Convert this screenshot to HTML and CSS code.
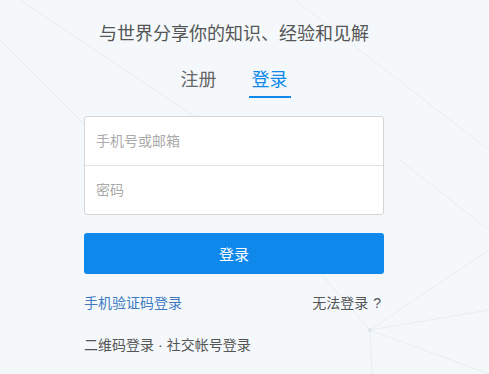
FILE: index.html
```html
<!DOCTYPE html>
<html lang="zh">
<head>
<meta charset="utf-8">
<link rel="stylesheet" href="styles.css">
</head>
<body>
<div class="page">
  <div class="panel">
    <h2 class="slogan">与世界分享你的知识、经验和见解</h2>
    <div class="tabs">
      <a class="tab">注册</a>
      <a class="tab active">登录</a>
    </div>
    <div class="fields">
      <div class="field"><span class="ph">手机号或邮箱</span></div>
      <div class="field"><span class="ph">密码</span></div>
    </div>
    <button class="submit">登录</button>
    <div class="links">
      <a class="sms">手机验证码登录</a>
      <a class="cant">无法登录<span class="q">?</span></a>
    </div>
    <div class="alt">二维码登录<span class="dot">·</span>社交帐号登录</div>
  </div>
</div>
</body>
</html>
```

FILE: styles.css
```css
html, body {
  margin: 0;
  padding: 0;
  height: 100%;
}
body {
  background-color: #f4f8fb;
  background-image: url("data:image/svg+xml;utf8,<svg xmlns='http://www.w3.org/2000/svg' width='489' height='374'><g stroke='%23e8edf1' stroke-width='1' fill='none'><line x1='0' y1='40' x2='170' y2='210'/><line x1='20' y1='0' x2='200' y2='120'/><line x1='295' y1='0' x2='489' y2='150'/><line x1='370' y1='330' x2='489' y2='250'/><line x1='370' y1='330' x2='489' y2='374'/><line x1='370' y1='330' x2='300' y2='250'/><line x1='370' y1='330' x2='372' y2='374'/><line x1='370' y1='330' x2='489' y2='310'/><line x1='400' y1='160' x2='489' y2='230'/></g><circle cx='370' cy='330' r='2' fill='%23e0e5e9'/></svg>");
  background-repeat: no-repeat;
  font-family: "Noto Sans CJK SC", "Liberation Sans", sans-serif;
  color: #555;
}
.page {
  padding-top: 17px;
  padding-left: 84px;
}
.panel {
  width: 300px;
  display: flex;
  flex-direction: column;
}
.slogan {
  margin: 0;
  font-size: 18px;
  font-weight: normal;
  line-height: 30px;
  text-align: center;
  color: #555;
}
.tabs {
  display: flex;
  justify-content: center;
  gap: 29px;
  margin-top: 17px;
}
.tab {
  font-size: 18px;
  line-height: 28px;
  padding: 0 3px 4px;
  color: #666;
  border-bottom: 2px solid transparent;
}
.tab.active {
  color: #0f88eb;
  border-bottom-color: #0f88eb;
}
.fields {
  margin-top: 18px;
  background: #fff;
  border: 1px solid #d5d5d5;
  border-radius: 3px;
}
.field {
  height: 48px;
  display: flex;
  align-items: center;
  padding-left: 11px;
  padding-bottom: 3px;
  box-sizing: border-box;
}
.field + .field {
  border-top: 1px solid #e2e2e2;
  height: 49px;
}
.ph {
  font-size: 14px;
  color: #aaa;
}
.submit {
  margin-top: 18px;
  height: 41px;
  border: none;
  border-radius: 3px;
  background: #0f88eb;
  color: #fff;
  font-family: inherit;
  font-size: 15px;
  padding: 0;
}
.links {
  display: flex;
  justify-content: space-between;
  margin-top: 18px;
  font-size: 14px;
  line-height: 20px;
  padding-right: 3px;
}
.sms {
  color: #3e7ac2;
}
.cant {
  color: #555;
}
.q {
  font-family: "Liberation Sans", sans-serif;
  margin-left: 5px;
}
.alt {
  margin-top: 21px;
  font-size: 14px;
  line-height: 20px;
  color: #555;
}
.dot {
  font-family: "Liberation Sans", sans-serif;
  margin: 0 4px;
}
```
